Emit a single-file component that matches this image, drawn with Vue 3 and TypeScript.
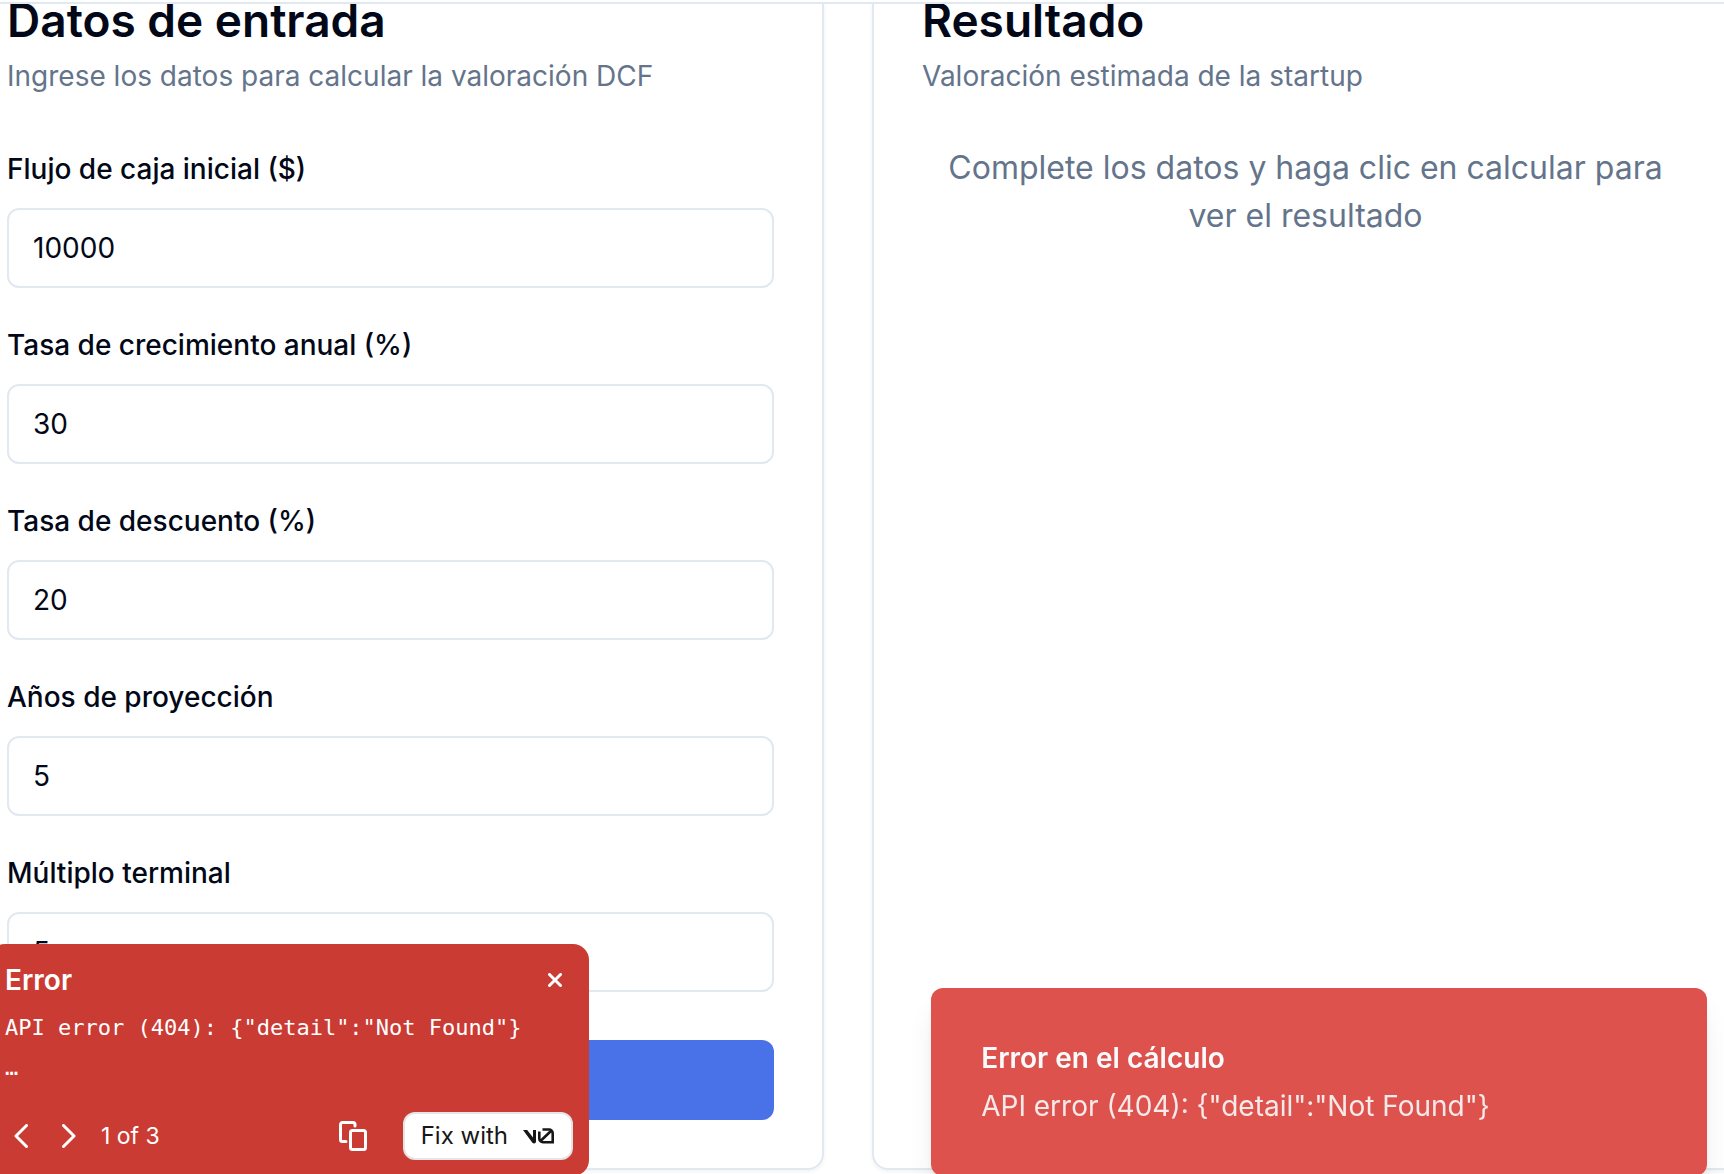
<script setup lang="ts">
import { reactive } from 'vue'

interface Field {
  id: string
  label: string
  value: string
}

const fields = reactive<Field[]>([
  { id: 'cash-flow', label: 'Flujo de caja inicial ($)', value: '10000' },
  { id: 'growth-rate', label: 'Tasa de crecimiento anual (%)', value: '30' },
  { id: 'discount-rate', label: 'Tasa de descuento (%)', value: '20' },
  { id: 'years', label: 'Años de proyección', value: '5' },
  { id: 'multiple', label: 'Múltiplo terminal', value: '5' },
])

const message = 'API error (404): {"detail":"Not Found"}'
</script>

<template>
  <div class="page">
    <header class="topbar"></header>
    <main class="columns">
      <section class="card">
        <h2>Datos de entrada</h2>
        <p class="description">Ingrese los datos para calcular la valoración DCF</p>
        <form class="form" @submit.prevent>
          <div v-for="field in fields" :key="field.id" class="field">
            <label :for="field.id">{{ field.label }}</label>
            <input :id="field.id" v-model="field.value" type="text" inputmode="numeric" />
          </div>
          <button class="submit" type="submit" aria-label="Enviar"></button>
        </form>
      </section>
      <section class="card">
        <h2>Resultado</h2>
        <p class="description">Valoración estimada de la startup</p>
        <p class="empty">Complete los datos y haga clic en calcular para ver el resultado</p>
      </section>
    </main>

    <div class="toast" role="alert">
      <strong>Error en el cálculo</strong>
      <span>{{ message }}</span>
    </div>

    <aside class="overlay" role="alertdialog" aria-labelledby="overlay-title">
      <div class="overlay-head">
        <h3 id="overlay-title">Error</h3>
        <button class="icon-button" type="button" aria-label="Close">
          <svg width="14" height="14" viewBox="0 0 14 14"><path d="M1.5 1.5l11 11M12.5 1.5l-11 11" stroke-width="3" /></svg>
        </button>
      </div>
      <pre>{{ message }}
…</pre>
      <div class="overlay-foot">
        <button class="icon-button chevron" type="button" aria-label="Previous">
          <svg width="14" height="24" viewBox="0 0 14 24"><path d="M12.5 1.5L2 12l10.5 10.5" stroke-width="3" /></svg>
        </button>
        <button class="icon-button chevron" type="button" aria-label="Next">
          <svg width="14" height="24" viewBox="0 0 14 24"><path d="M1.5 1.5L12 12 1.5 22.5" stroke-width="3" /></svg>
        </button>
        <span class="count">1 of 3</span>
        <button class="icon-button copy" type="button" aria-label="Copy">
          <svg width="28" height="30" viewBox="0 0 28 30">
            <path d="M7 20.5H3.5a2 2 0 0 1-2-2v-15a2 2 0 0 1 2-2H14a2 2 0 0 1 2 2V5" stroke-width="3" />
            <rect x="11.5" y="9.5" width="15" height="19" rx="2" stroke-width="3" />
          </svg>
        </button>
        <button class="fix" type="button">
          <span>Fix with</span>
          <svg width="32" height="16" viewBox="0 0 32 16" aria-label="v0">
            <path fill="#171717" d="M0 2h4.200l5.800 7.600V2h3v11.600c0 2-2.500 2.500-3.800 1z" />
            <path fill="none" stroke="#171717" stroke-width="2.600" d="M19.500 1.500H26a3.700 3.700 0 0 1 3.700 3.700V14.200H20A3.700 3.700 0 0 1 16.300 10.500V3.500M17.500 13L28.500 2.500" />
          </svg>
        </button>
      </div>
    </aside>
  </div>
</template>

<style>
html,
body {
  margin: 0;
  overflow: hidden;
}
</style>

<style scoped>
* {
  box-sizing: border-box;
}

.page {
  position: relative;
  height: 100vh;
  overflow: hidden;
  background: #fff;
  color: #020817;
  font-family: Inter, sans-serif;
  font-size: 28px;
  line-height: 40px;
}

h2,
h3,
p,
pre {
  margin: 0;
}

button,
input {
  font: inherit;
  color: inherit;
}

.topbar {
  position: relative;
  z-index: 1;
  height: 4px;
  border-bottom: 2px solid #e2e8f0;
  background: #fff;
}

.columns {
  display: grid;
  grid-template-columns: 1fr 1fr;
  gap: 48px;
  margin: -58px -15px 0 -43px;
}

.card {
  padding: 48px;
  border: 2px solid #e2e8f0;
  border-radius: 16px;
  box-shadow: 0 2px 4px rgba(0, 0, 0, 0.05);
}

h2 {
  margin-bottom: 12px;
  font-size: 46px;
  font-weight: 600;
  line-height: 48px;
}

.description {
  margin-bottom: 48px;
  color: #64748b;
}

.form {
  display: flex;
  flex-direction: column;
  gap: 32px;
}

.field {
  display: flex;
  flex-direction: column;
  gap: 14px;
}

.field label {
  font-weight: 500;
  line-height: 50px;
}

.field input {
  width: 100%;
  height: 80px;
  padding: 0 24px;
  border: 2px solid #e2e8f0;
  border-radius: 12px;
  background: #fff;
}

.submit {
  height: 80px;
  margin-top: 16px;
  border: 0;
  border-radius: 12px;
  background: #4a72e8;
}

.empty {
  color: #64748b;
  font-size: 32px;
  line-height: 48px;
  text-align: center;
}

.toast {
  position: fixed;
  right: 17px;
  bottom: -2px;
  display: flex;
  flex-direction: column;
  gap: 8px;
  width: 45%;
  padding: 50px;
  border-radius: 12px;
  background: #dd524c;
  color: #f8fafc;
  box-shadow: 0 20px 30px -6px rgba(0, 0, 0, 0.1), 0 8px 12px -4px rgba(0, 0, 0, 0.1);
}

.toast strong {
  font-weight: 600;
}

.toast span {
  opacity: 0.9;
}

.overlay {
  position: fixed;
  left: -11px;
  bottom: -2px;
  width: 600px;
  padding: 16px;
  border-radius: 16px;
  background: #ca3b34;
  color: #fff;
}

.overlay-head,
.overlay-foot {
  display: flex;
  align-items: center;
}

.overlay-head {
  justify-content: space-between;
  padding-right: 11px;
}

h3 {
  font-size: 28px;
  font-weight: 600;
}

.icon-button {
  display: flex;
  padding: 0;
  border: 0;
  background: none;
}

.icon-button svg {
  fill: none;
  stroke: #fff;
  stroke-linecap: round;
  stroke-linejoin: round;
}

pre {
  margin: 8px 0 24px;
  font-family: "DejaVu Sans Mono", monospace;
  font-size: 22px;
  line-height: 40px;
}

.chevron {
  margin-left: 9px;
  margin-right: 25px;
}

.count {
  font-size: 23px;
}

.copy {
  margin-left: auto;
  margin-right: 36px;
}

.fix {
  display: flex;
  align-items: center;
  gap: 15px;
  height: 48px;
  padding: 0 16px;
  border: 2px solid #e5e5e5;
  border-radius: 12px;
  background: #fff;
  color: #171717;
  font-size: 24px;
}
</style>
